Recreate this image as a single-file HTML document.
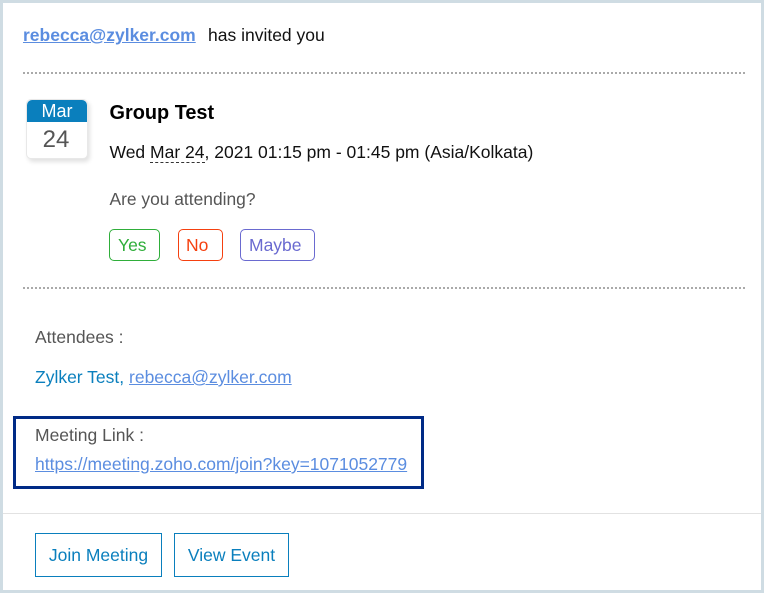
<!DOCTYPE html>
<html><head><meta charset="utf-8">
<style>
html,body{margin:0;padding:0}
body{width:764px;height:593px;position:relative;overflow:hidden;background:#fff;font-family:"Liberation Sans",sans-serif;font-size:17.5px;color:#555}
.a{position:absolute;white-space:nowrap;line-height:20px}
.f{position:absolute;box-sizing:border-box}
.l{color:#5b8de0;text-decoration:underline}
.dot{position:absolute;left:23px;width:724px;height:2px;background-image:linear-gradient(to right,#aaa 2px,transparent 2px);background-size:4px 2px}
.btn{position:absolute;box-sizing:border-box;border:1px solid;border-radius:5px;height:32px;line-height:30px;font-size:17.5px;top:229px}
.b2{position:absolute;box-sizing:border-box;border:1px solid #0a7fbd;color:#0a7fbd;top:533px;height:44px;line-height:42px;text-align:center;font-size:17.5px}
</style></head><body>
<div class="f" style="left:0;top:0;width:764px;height:593px;border:3px solid #cfdce3"></div>
<div class="a" style="left:23px;top:25px;font-weight:bold;color:#5b8de0;text-decoration:underline">rebecca@zylker.com</div>
<div class="a" style="left:208px;top:25px;color:#111">has invited you</div>
<div class="dot" style="top:72px"></div>
<div class="f" style="left:26px;top:99px;width:62px;height:60px;border-radius:5px;background:#fff;border:1px solid #e8e8e8;box-shadow:2px 3px 4px #e2e2e2"></div>
<div class="f" style="left:27px;top:100px;width:60px;height:22px;background:#0a7fbd;border-radius:5px 5px 0 0;color:#fff;text-align:center;line-height:22px;font-size:18px">Mar</div>
<div class="f" style="left:26px;top:125px;width:60px;text-align:center;font-size:24px;line-height:30px;color:#555">24</div>
<div class="a" style="left:109.5px;top:103px;font-weight:bold;color:#000;font-size:19.9px">Group Test</div>
<div class="a" style="left:109.5px;top:142px;color:#111">Wed <span style="border-bottom:1px dashed #333">Mar 24</span>, 2021 01:15 pm - 01:45 pm (Asia/Kolkata)</div>
<div class="a" style="left:109.5px;top:189px;font-size:17.4px">Are you attending?</div>
<div class="btn" style="left:109px;width:51px;padding-left:8px;color:#2fae3a;border-color:#2fae3a">Yes</div>
<div class="btn" style="left:178px;width:45px;padding-left:7px;color:#f5400f;border-color:#f5400f">No</div>
<div class="btn" style="left:240px;width:75px;padding-left:8px;color:#6a6ad0;border-color:#6a6ad0">Maybe</div>
<div class="dot" style="top:287px"></div>
<div class="a" style="left:35px;top:327px">Attendees :</div>
<div class="a" style="left:35px;top:367px;color:#0a7fbd">Zylker Test, <span class="l">rebecca@zylker.com</span></div>
<div class="f" style="left:13px;top:416px;width:411px;height:73px;border:3px solid #002a86"></div>
<div class="a" style="left:35px;top:425px">Meeting Link :</div>
<div class="a l" style="left:35px;top:454px">https://meeting.zoho.com/join?key=1071052779</div>
<div class="f" style="left:3px;top:513px;width:758px;height:1px;background:#e2e2e2"></div>
<div class="b2" style="left:35px;width:127px">Join Meeting</div>
<div class="b2" style="left:174px;width:115px">View Event</div>
</body></html>
